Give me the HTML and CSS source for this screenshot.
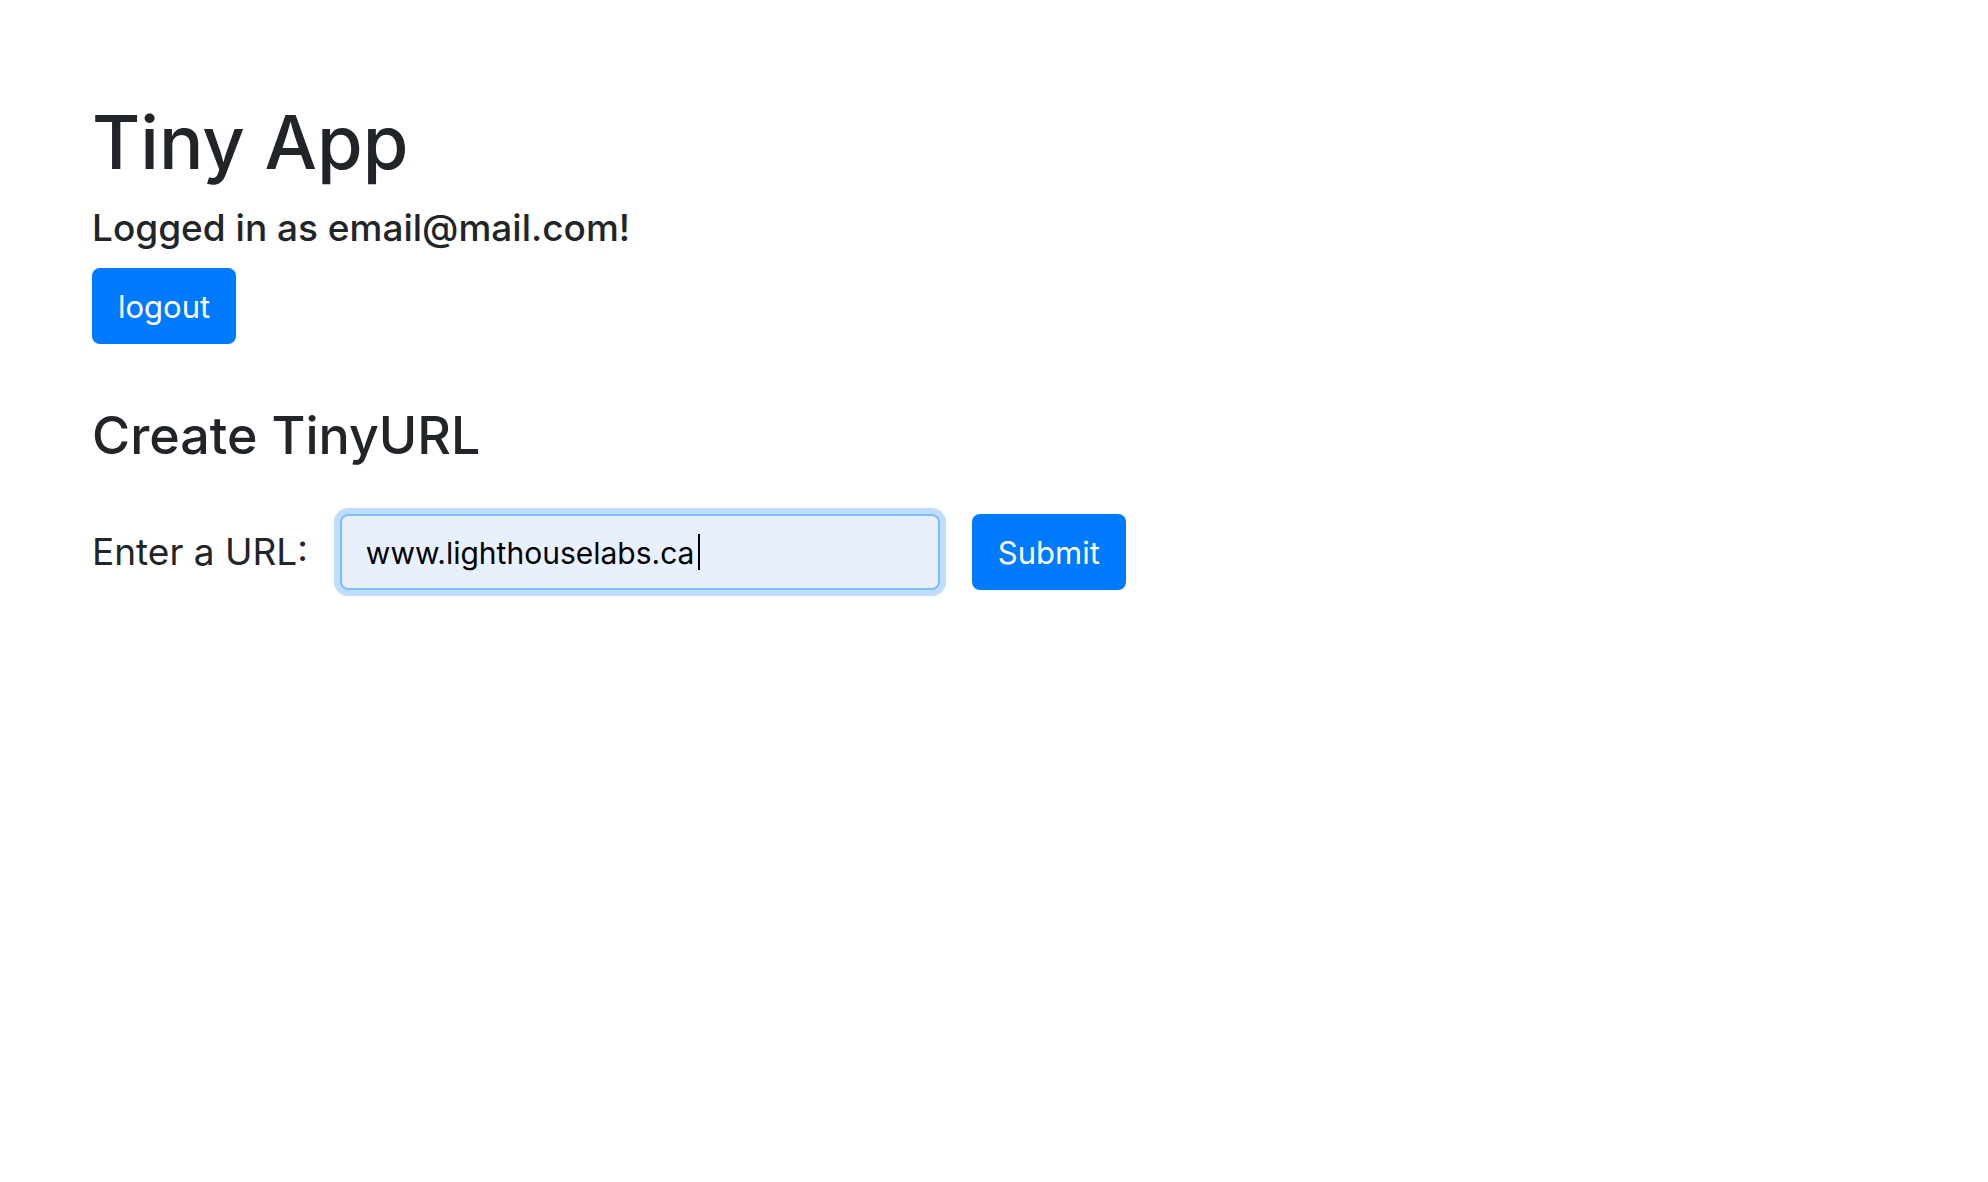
FILE: index.html
```html
<!DOCTYPE html>
<html lang="en">
<head>
<meta charset="utf-8">
<meta name="viewport" content="width=device-width, initial-scale=1">
<title>Tiny App</title>
<link rel="stylesheet" href="styles.css">
</head>
<body>
<header class="site-header">
<h1 class="brand">Tiny App</h1>
<p class="status">Logged in as email@mail.com!</p>
<form class="logout"><button class="btn" type="submit">logout</button></form>
</header>
<main>
<h2 class="title">Create TinyURL</h2>
<form class="url-form">
<label class="label" for="url">Enter a URL:</label>
<div class="field-wrap">
<input class="field" id="url" name="longURL" type="text" value="www.lighthouselabs.ca">
<span class="caret" aria-hidden="true"></span>
</div>
<button class="btn" type="submit">Submit</button>
</form>
</main>
</body>
</html>
```
FILE: styles.css
```css
* { box-sizing: border-box; }
body {
  margin: 0;
  padding: 92px;
  background: #fff;
  color: #212529;
  font-family: Inter, "Liberation Sans", sans-serif;
  font-size: 37px;
  line-height: 56px;
}
h1, h2, p { margin: 0; font-weight: 500; }
.brand { font-size: 74px; line-height: 100px; margin-bottom: 12px; }
.status { font-size: 37px; line-height: 48px; margin-bottom: 16px; }
.logout { display: flex; }
.btn {
  padding: 15px 26px 13px;
  border: 0;
  border-radius: 8px;
  background: #007bff;
  color: #fff;
  font: 400 31px/48px Inter, "Liberation Sans", sans-serif;
}
.title { margin: 56px 0 42px; font-size: 52px; line-height: 72px; }
.url-form { display: flex; flex-wrap: wrap; align-items: center; }
.field-wrap { position: relative; width: 600px; max-width: 100%; margin: 0 32px; }
.field {
  display: block;
  width: 100%;
  height: 76px;
  padding: 2px 24px 0;
  border: 2px solid #80bdff;
  border-radius: 8px;
  outline: 0;
  background: #e8f0fe;
  color: #000;
  caret-color: transparent;
  font: 400 30px/48px Inter, "Liberation Sans", sans-serif;
  box-shadow: 0 0 0 6px #bfdeff;
}
/* Text cursor at the end of the entered address */
.caret {
  position: absolute;
  top: 20px;
  left: 358px;
  width: 2px;
  height: 36px;
  background: #000;
  pointer-events: none;
}
```
